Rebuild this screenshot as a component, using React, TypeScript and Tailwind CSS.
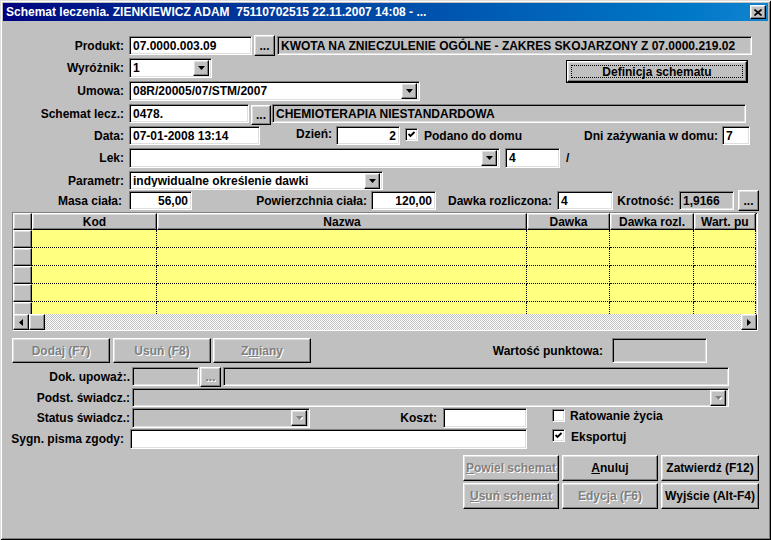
import React from "react";

const sunken =
  "border border-t-[#808080] border-l-[#808080] border-r-white border-b-white shadow-[inset_1px_1px_0_#000,inset_-1px_-1px_0_#dfdfdf]";
const raised =
  "border border-t-white border-l-white border-r-black border-b-black shadow-[inset_-1px_-1px_0_#808080,inset_1px_1px_0_#dfdfdf]";
const dis = "text-[#808080] [text-shadow:1px_1px_0_#fff]";

const Lbl = ({ className = "", children }: { className?: string; children: React.ReactNode }) => (
  <div className={`flex items-center justify-end shrink-0 whitespace-nowrap ${className}`}>{children}</div>
);

const Field = ({
  className = "",
  gray = false,
  right = false,
  children,
}: {
  className?: string;
  gray?: boolean;
  right?: boolean;
  children?: React.ReactNode;
}) => (
  <div
    className={`${sunken} shrink-0 h-full flex items-center px-[3px] overflow-hidden whitespace-nowrap ${
      gray ? "bg-[#c0c0c0]" : "bg-white"
    } ${right ? "justify-end" : ""} ${className}`}
  >
    {children}
  </div>
);

const Arrow = ({ disabled = false }: { disabled?: boolean }) => (
  <div className={`${raised} w-[16px] h-[16px] bg-[#c0c0c0] flex items-center justify-center shrink-0`}>
    <svg width="7" height="4" viewBox="0 0 7 4">
      {disabled && <polygon points="1,1 8,1 4.5,5" fill="#fff" />}
      <polygon points="0,0 7,0 3.5,4" fill={disabled ? "#808080" : "#000"} />
    </svg>
  </div>
);

const Combo = ({
  className = "",
  gray = false,
  disabled = false,
  children,
}: {
  className?: string;
  gray?: boolean;
  disabled?: boolean;
  children?: React.ReactNode;
}) => (
  <div
    className={`${sunken} shrink-0 h-full flex items-center pl-[3px] pr-[2px] ${
      gray ? "bg-[#c0c0c0]" : "bg-white"
    } ${className}`}
  >
    <div className="flex-1 overflow-hidden whitespace-nowrap">{children}</div>
    <Arrow disabled={disabled} />
  </div>
);

const Btn = ({
  className = "",
  disabled = false,
  children,
}: {
  className?: string;
  disabled?: boolean;
  children: React.ReactNode;
}) => (
  <div
    className={`${raised} shrink-0 bg-[#c0c0c0] flex items-center justify-center whitespace-nowrap ${
      disabled ? dis : ""
    } ${className}`}
  >
    {children}
  </div>
);

const Check = ({ checked = false, className = "" }: { checked?: boolean; className?: string }) => (
  <div className={`${sunken} w-[13px] h-[13px] bg-white shrink-0 flex items-center justify-center ${className}`}>
    {checked && (
      <svg width="9" height="9" viewBox="0 0 9 9">
        <polyline points="1.5,4 3.5,6 7.5,2" fill="none" stroke="#000" strokeWidth="1.8" />
      </svg>
    )}
  </div>
);

const columns = [
  { name: "Kod", w: "w-[125px]", head: "justify-center" },
  { name: "Nazwa", w: "w-[370px]", head: "justify-center" },
  { name: "Dawka", w: "w-[83px]", head: "justify-center" },
  { name: "Dawka rozl.", w: "w-[84px]", head: "justify-center" },
  { name: "Wart. pu", w: "w-[62px]", head: "justify-start pl-[6px]" },
];

function Grid() {
  return (
    <div className={`ml-[12px] mt-[2px] w-[746px] h-[119px] ${sunken} bg-[#c0c0c0] flex flex-col overflow-hidden`}>
      <div className="flex h-[17px] shrink-0 overflow-hidden">
        <div className={`${raised} w-[19px] shrink-0`} />
        {columns.map((c) => (
          <div key={c.name} className={`${raised} ${c.w} ${c.head} shrink-0 flex items-center overflow-hidden whitespace-nowrap`}>
            {c.name}
          </div>
        ))}
      </div>
      <div className="flex-1 overflow-hidden">
        {[0, 1, 2, 3, 4].map((r) => (
          <div key={r} className="flex h-[18px]">
            <div className={`${raised} w-[19px] shrink-0 bg-[#c0c0c0]`} />
            {columns.map((c) => (
              <div
                key={c.name}
                className={`${c.w} shrink-0 bg-[#ffff80] border-r border-b border-dotted border-black`}
              />
            ))}
          </div>
        ))}
      </div>
      <div className="flex h-[16px] shrink-0">
        <div className={`${raised} w-[16px] bg-[#c0c0c0] flex items-center justify-center`}>
          <svg width="4" height="7" viewBox="0 0 4 7">
            <polygon points="4,0 4,7 0,3.5" fill="#000" />
          </svg>
        </div>
        <div className={`${raised} w-[16px] bg-[#c0c0c0]`} />
        <div className="flex-1 bg-[repeating-conic-gradient(#c0c0c0_0_25%,#ffffff_0_50%)] bg-[length:2px_2px]" />
        <div className={`${raised} w-[16px] bg-[#c0c0c0] flex items-center justify-center`}>
          <svg width="4" height="7" viewBox="0 0 4 7">
            <polygon points="0,0 0,7 4,3.5" fill="#000" />
          </svg>
        </div>
      </div>
    </div>
  );
}

export default function App() {
  return (
    <div className="w-[771px] h-[540px] bg-[#c0c0c0] overflow-hidden font-['Liberation_Sans',Arial,sans-serif] text-[12px] font-bold text-black leading-none shadow-[inset_1px_1px_0_#dfdfdf,inset_-1px_-1px_0_#000,inset_2px_2px_0_#fff,inset_-2px_-2px_0_#808080]">
      {/* title bar */}
      <div className="mx-[3px] mt-[3px] h-[18px] bg-linear-to-r from-[#000080] to-[#1084d0] flex items-center pl-[3px] pr-[2px] text-white">
        <div className="flex-1 whitespace-pre">Schemat leczenia. ZIENKIEWICZ ADAM  75110702515 22.11.2007 14:08 - ...</div>
        <div className={`${raised} w-[16px] h-[14px] bg-[#c0c0c0] flex items-center justify-center`}>
          <svg width="8" height="7" viewBox="0 0 8 7">
            <path d="M0.5 0.5 L7.5 6.5 M7.5 0.5 L0.5 6.5" stroke="#000" strokeWidth="1.6" />
          </svg>
        </div>
      </div>

      {/* Produkt */}
      <div className="flex h-[19px] mt-[15px]">
        <Lbl className="w-[124px]">Produkt:</Lbl>
        <Field className="ml-[5px] w-[123px]">07.0000.003.09</Field>
        <Btn className="ml-[2px] w-[21px] h-[21px] -mt-[1px]">...</Btn>
        <Field gray className="ml-[2px] w-[475px]">KWOTA NA ZNIECZULENIE OGÓLNE - ZAKRES SKOJARZONY Z 07.0000.219.02</Field>
      </div>

      {/* Wyróżnik */}
      <div className="flex h-[20px] mt-[3px]">
        <Lbl className="w-[124px]">Wyróżnik:</Lbl>
        <Combo className="ml-[5px] w-[83px]">1</Combo>
        <div className="ml-[354px] mt-[2px] w-[182px] h-[23px] border border-black shrink-0 self-start">
          <div className={`${raised} w-full h-full bg-[#c0c0c0] flex items-center justify-center p-[3px]`}>
            <div className="w-full h-full border border-dotted border-black flex items-center justify-center">
              Definicja schematu
            </div>
          </div>
        </div>
      </div>

      {/* Umowa */}
      <div className="flex h-[20px] mt-[3px]">
        <Lbl className="w-[124px]">Umowa:</Lbl>
        <Combo className="ml-[5px] w-[291px]">08R/20005/07/STM/2007</Combo>
      </div>

      {/* Schemat lecz. */}
      <div className="flex h-[19px] mt-[3px]">
        <Lbl className="w-[124px]">Schemat lecz.:</Lbl>
        <Field className="ml-[5px] w-[120px]">0478.</Field>
        <Btn className="ml-[2px] w-[20px] h-[20px] mt-[1px]">...</Btn>
        <Field gray className="ml-[1px] w-[474px]">CHEMIOTERAPIA NIESTANDARDOWA</Field>
      </div>

      {/* Data */}
      <div className="flex h-[19px] mt-[3px]">
        <Lbl className="w-[124px]">Data:</Lbl>
        <Field className="ml-[5px] w-[131px]">07-01-2008 13:14</Field>
        <Lbl className="w-[72px] pb-[4px]">Dzień:</Lbl>
        <Field right className="ml-[4px] w-[64px]">2</Field>
        <Check checked className="ml-[5px] mt-[2px]" />
        <Lbl className="ml-[6px]">Podano do domu</Lbl>
        <Lbl className="ml-auto">Dni zażywania w domu:</Lbl>
        <Field className="ml-[4px] w-[28px] mr-[21px]">7</Field>
      </div>

      {/* Lek */}
      <div className="flex h-[20px] mt-[3px]">
        <Lbl className="w-[124px]">Lek:</Lbl>
        <Combo className="ml-[5px] w-[371px]" />
        <Field className="ml-[5px] w-[55px]">4</Field>
        <Lbl className="ml-[6px]">/</Lbl>
      </div>

      {/* Parametr */}
      <div className="flex h-[19px] mt-[3px]">
        <Lbl className="w-[124px]">Parametr:</Lbl>
        <Combo className="ml-[5px] w-[254px]">indywidualne określenie dawki</Combo>
      </div>

      {/* Masa */}
      <div className="flex h-[19px] mt-[1px]">
        <Lbl className="w-[122px]">Masa ciała:</Lbl>
        <Field right className="ml-[7px] w-[63px]">56,00</Field>
        <Lbl className="w-[175px]">Powierzchnia ciała:</Lbl>
        <Field right className="ml-[4px] w-[65px]">120,00</Field>
        <Lbl className="w-[116px]">Dawka rozliczona:</Lbl>
        <Field className="ml-[5px] w-[56px]">4</Field>
        <Lbl className="w-[61px]">Krotność:</Lbl>
        <Field gray className="ml-[5px] w-[55px]">1,9166</Field>
        <Btn className="ml-[4px] w-[21px] h-[21px] -mt-[1px]">...</Btn>
      </div>

      <Grid />

      {/* buttons row */}
      <div className="flex h-[25px] mt-[7px] ml-[12px] items-center">
        <Btn disabled className="w-[98px] h-full">Dodaj (F7)</Btn>
        <Btn disabled className="ml-[3px] w-[98px] h-full">Usuń (F8)</Btn>
        <Btn disabled className="ml-[2px] w-[98px] h-full">
          <span>
            Z<span className="underline">m</span>iany
          </span>
        </Btn>
        <Lbl className="w-[292px]">Wartość punktowa:</Lbl>
        <Field gray className="ml-[9px] w-[95px] h-[17px]" />
      </div>

      {/* Dok. upoważ */}
      <div className="flex h-[19px] mt-[4px]">
        <Lbl className="w-[130px]">Dok. upoważ:.</Lbl>
        <Field gray className="ml-[2px] w-[67px]" />
        <Btn disabled className="ml-[1px] w-[21px] h-[20px]">...</Btn>
        <Field gray className="ml-[2px] w-[506px]" />
      </div>

      {/* Podst. świadcz. */}
      <div className="flex h-[19px] mt-[2px]">
        <Lbl className="w-[130px]">Podst. świadcz.:</Lbl>
        <Combo gray disabled className="ml-[2px] w-[597px]" />
      </div>

      {/* Status świadcz. */}
      <div className="flex h-[20px] mt-[1px]">
        <Lbl className="w-[130px]">Status świadcz.:</Lbl>
        <Combo gray disabled className="ml-[2px] w-[178px]" />
        <Lbl className="w-[127px]">Koszt:</Lbl>
        <Field className="ml-[6px] w-[84px] h-[19px]" />
        <Check className="ml-[25px] mt-[1px]" />
        <Lbl className="ml-[5px] self-start h-[15px]">Ratowanie życia</Lbl>
      </div>

      {/* Sygn. pisma zgody */}
      <div className="flex h-[20px] mt-[1px]">
        <Lbl className="w-[124px]">Sygn. pisma zgody:</Lbl>
        <Field className="ml-[6px] w-[397px]" />
        <Check checked className="ml-[25px]" />
        <Lbl className="ml-[6px] self-start h-[15px]">Eksportuj</Lbl>
      </div>

      {/* bottom buttons */}
      <div className="ml-[463px] mt-[6px] grid grid-cols-[96px_96px_98px] gap-x-[3px] gap-y-[2px] w-[296px]">
        <Btn disabled className="h-[26px]">
          <span>
            <span className="underline">P</span>owiel schemat
          </span>
        </Btn>
        <Btn className="h-[26px]">
          <span>
            <span className="underline">A</span>nuluj
          </span>
        </Btn>
        <Btn className="h-[26px]">Zatwierdź (F12)</Btn>
        <Btn disabled className="h-[26px]">
          <span>
            <span className="underline">U</span>suń schemat
          </span>
        </Btn>
        <Btn disabled className="h-[26px]">Edycja (F6)</Btn>
        <Btn className="h-[26px]">Wyjście (Alt-F4)</Btn>
      </div>
    </div>
  );
}
